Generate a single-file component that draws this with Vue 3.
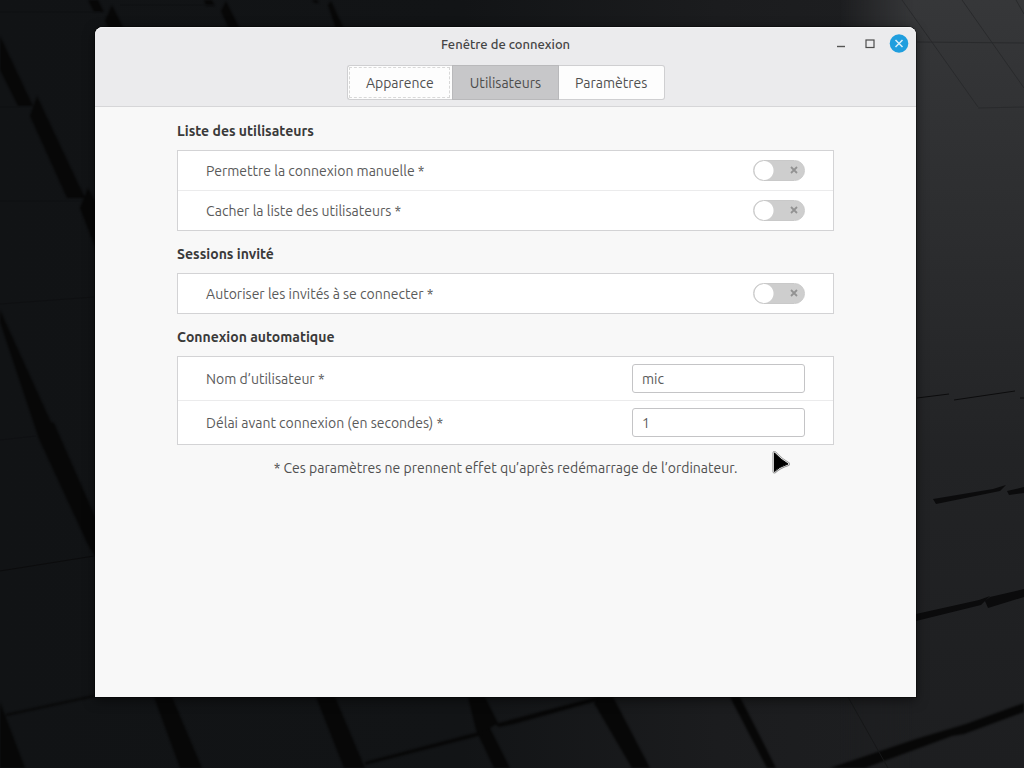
<script setup>
import { reactive, ref } from 'vue'

const tabs = ['Apparence', 'Utilisateurs', 'Paramètres']
const current = ref('Utilisateurs')

const sections = reactive([
  {
    title: 'Liste des utilisateurs',
    rows: [
      { id: 'manual', label: 'Permettre la connexion manuelle *', type: 'switch', value: false },
      { id: 'hide', label: 'Cacher la liste des utilisateurs *', type: 'switch', value: false },
    ],
  },
  {
    title: 'Sessions invité',
    rows: [
      { id: 'guest', label: 'Autoriser les invités à se connecter *', type: 'switch', value: false },
    ],
  },
  {
    title: 'Connexion automatique',
    rows: [
      { id: 'user', label: 'Nom d’utilisateur *', type: 'text', value: 'mic' },
      { id: 'delay', label: 'Délai avant connexion (en secondes) *', type: 'text', value: '1' },
    ],
  },
])
</script>

<template>
  <div class="desktop">
    <svg class="wallpaper" viewBox="0 0 1024 768" preserveAspectRatio="xMidYMid slice" aria-hidden="true">
      <defs>
        <linearGradient id="base" x1="0" y1="0" x2="1" y2="0">
          <stop offset="0" stop-color="#111315" />
          <stop offset="0.45" stop-color="#121416" />
          <stop offset="0.7" stop-color="#1b1c1e" />
          <stop offset="1" stop-color="#1f2022" />
        </linearGradient>
        <linearGradient id="glow" x1="0" y1="0" x2="0" y2="1">
          <stop offset="0" stop-color="#363739" />
          <stop offset="0.3" stop-color="#2c2d2f" />
          <stop offset="0.6" stop-color="#222325" />
          <stop offset="1" stop-color="#1d1e20" />
        </linearGradient>
        <linearGradient id="fade" x1="0" y1="0" x2="1" y2="0">
          <stop offset="0" stop-color="#fff" stop-opacity="0" />
          <stop offset="0.4" stop-color="#fff" />
        </linearGradient>
        <mask id="right"><rect x="840" width="184" height="768" fill="url(#fade)" /></mask>
        <filter id="soft" x="-5%" y="-5%" width="110%" height="110%" color-interpolation-filters="sRGB"><feGaussianBlur stdDeviation="0.8" /></filter>
      </defs>
      <rect width="1024" height="768" fill="url(#base)" />
      <rect x="840" width="184" height="768" fill="url(#glow)" mask="url(#right)" />
      <g fill="#070707" filter="url(#soft)">
        <path d="M88 0h10l6 12h-10zM105 21l7-16 12 24h-15zM204 0h8l3 6h-9zM221 11l5-10 14 28h-11zM312 0h5l2 3h-4zM328 5l3-4 13 28h-8z" />
        <path d="M0 36l33 70H18L0 70zM30 116l7-20 48 102H67zM80 208l8-20 12 22v50z" />
        <path d="M0 322V310l51 112 3 1 43 98v38l-8-12-50-108z" />
        <path d="M0 702l25 66H0z" />
        <path d="M154 697h18l30 71h-22zM316 697h19l30 71h-21zM468 697h17l13 26-8 5 20 40h-16l-18-38z" />
        <path d="M594 703l6-6h13l37 71h-18zM730 697h10l36 71h-9z" />
        <path d="M6 714l88-19v2L6 716zM365 762l125-33v4l-125 32zM495 724l105-28v4l-86 24-15 3z" />
        <path d="M830 768l86-29 50-15 58-21v9l-60 22-12 2-87 32z" />
      </g>
      <g fill="#0b0b0c">
        <path d="M933 499l60-10 13-4-6 6-64 13zM1007 491l17-4v6l-15 2z" />
        <path d="M916 614l63-14 11-4-9 9-65 16zM985 601l5-4 34-8v8l-36 11z" />
      </g>
      <g fill="none" stroke="#0c0c0d">
        <path d="M0 571l94-15M917 398l32-4M954 400l61-9M1020 398h4" />
        <path d="M848 697l40 71" stroke="#161718" />
        <path d="M902 0l76 107M962 0l62 88M917 42l107 1M978 108l46-1M1016 0l8 14" stroke="#292a2c" />
        <path d="M0 107h32M0 201h82M0 304l94-7M0 440l36-4M0 12h100M120 5h95" stroke="#0f1012" />
      </g>
    </svg>

    <main class="window">
      <header class="titlebar">
        <div class="caption">
          <h1>Fenêtre de connexion</h1>
          <div class="controls">
            <button type="button" aria-label="Réduire">
              <svg width="20" height="20" viewBox="0 0 20 20"><path d="M6 12.5h8" stroke="#555" stroke-width="1.4" /></svg>
            </button>
            <button type="button" aria-label="Agrandir">
              <svg width="20" height="20" viewBox="0 0 20 20"><rect x="6" y="6" width="8" height="7.5" fill="none" stroke="#4c4c4c" stroke-width="1.2" /></svg>
            </button>
            <button type="button" aria-label="Fermer">
              <svg width="20" height="20" viewBox="0 0 20 20"><circle cx="10" cy="9.5" r="9.3" fill="#1f9ede" /><path d="M6.5 6l7 7M13.5 6l-7 7" stroke="#d8effa" stroke-width="1.5" /></svg>
            </button>
          </div>
        </div>
        <nav class="tabs">
          <button
            v-for="(tab, i) in tabs"
            :key="tab"
            type="button"
            :class="{ active: tab === current, focused: i === 0 }"
            @click="current = tab"
          >{{ tab }}</button>
        </nav>
      </header>

      <div class="content">
        <section v-for="section in sections" :key="section.title">
          <h2>{{ section.title }}</h2>
          <div class="list">
            <div v-for="row in section.rows" :key="row.id" class="row" :class="row.type">
              <label :for="row.id">{{ row.label }}</label>
              <span v-if="row.type === 'switch'" class="toggle">
                <input :id="row.id" v-model="row.value" type="checkbox" role="switch" />
                <svg width="8" height="8" viewBox="0 0 8 8" aria-hidden="true"><path d="M1 1l6 6M7 1l-6 6" stroke="#929292" stroke-width="1.8" /></svg>
              </span>
              <input v-else :id="row.id" v-model="row.value" class="field" type="text" />
            </div>
          </div>
        </section>
        <p class="note">* Ces paramètres ne prennent effet qu’après redémarrage de l’ordinateur.</p>
      </div>
    </main>

    <svg class="pointer" width="20" height="26" viewBox="0 0 20 26" aria-hidden="true">
      <path d="M3.5 4v18.5q4-4.500 13.500-7.500Q10 11 3.500 4z" fill="#000" stroke="#8c8c8c" stroke-width="4" stroke-linejoin="round" />
      <path d="M3.500 4v18.500q4-4.500 13.500-7.500Q10 11 3.500 4z" fill="#000" stroke="#d8d8d8" stroke-width="2.600" stroke-linejoin="round" />
      <path d="M3.500 4v18.500q4-4.500 13.500-7.500Q10 11 3.500 4z" fill="#000" stroke="#000" stroke-linejoin="round" />
    </svg>
  </div>
</template>

<style>
body {
  margin: 0;
  background: #111315;
}
</style>

<style scoped>
.desktop {
  position: relative;
  box-sizing: border-box;
  display: flex;
  min-height: 100vh;
  padding: 27px 108px 71px 95px;
  font: 14px/18px Ubuntu, "Noto Sans", sans-serif;
  color: #5a5a5a;
}
.wallpaper {
  position: absolute;
  inset: 0;
  width: 100%;
  height: 100%;
}
.window {
  position: relative;
  flex: 1;
  background: #f8f8f8;
  border-radius: 8px 8px 0 0;
  box-shadow: 0 0 0 1px rgba(0, 0, 0, 0.35), 0 3px 12px rgba(0, 0, 0, 0.5);
}
.titlebar {
  background: #ebebed;
  border-bottom: 1px solid #d6d6d8;
  border-radius: 8px 8px 0 0;
  box-shadow: inset 0 1px #f5f5f6;
  padding-bottom: 6px;
}
.caption {
  display: grid;
  grid-template-columns: 1fr auto 1fr;
  align-items: center;
  height: 34px;
  padding: 0 7px;
  margin-bottom: 4px;
}
h1 {
  grid-column: 2;
  margin: 0;
  font-size: 13px;
  font-weight: 500;
  color: #444;
}
.controls {
  display: flex;
  justify-content: flex-end;
  gap: 9px;
}
.controls button {
  display: flex;
  padding: 0;
  border: 0;
  background: none;
}
.tabs {
  display: flex;
  width: 318px;
  height: 35px;
  margin: 0 auto;
}
.tabs button {
  position: relative;
  flex: 1;
  padding: 0;
  border: 1px solid #cfcfd1;
  border-width: 1px 0;
  background: #fdfdfd;
  font: inherit;
  color: #505050;
}
.tabs button:first-child {
  border-left-width: 1px;
  border-radius: 3px 0 0 3px;
}
.tabs button:last-child {
  border-right-width: 1px;
  border-radius: 0 3px 3px 0;
}
.tabs .active {
  border: 1px solid #b9b9bb;
  background: #c7c7c9;
  color: #4c4c4c;
}
.tabs .focused {
  outline: 1px dashed #d8d8d8;
  outline-offset: -3px;
}
.content {
  padding: 15px 10% 0;
}
h2 {
  margin: 0 0 10px;
  font-size: 14px;
  line-height: 18px;
  font-weight: 700;
  color: #3a3a3a;
}
section {
  margin-bottom: 14px;
}
.list {
  border: 1px solid #d3d3d5;
  background: #fff;
}
.row {
  display: flex;
  align-items: center;
  justify-content: space-between;
  height: 39px;
  padding: 0 28px;
}
.row.text {
  height: 43px;
}
.row + .row {
  border-top: 1px solid #ebebec;
}
.toggle {
  display: flex;
  position: relative;
}
.toggle input {
  appearance: none;
  box-sizing: border-box;
  width: 52px;
  height: 21px;
  margin: 0;
  border: 1px solid #c9c9c9;
  border-radius: 11px;
  background: radial-gradient(circle at 10px 50%, #fff 9px, #cecece 10px);
}
.toggle input:checked {
  background: radial-gradient(circle at 40px 50%, #fff 9px, #1f9ede 10px);
}
.toggle svg {
  position: absolute;
  top: 6px;
  right: 7px;
  pointer-events: none;
}
.field {
  box-sizing: border-box;
  width: 173px;
  height: 29px;
  padding: 0 9px;
  border: 1px solid #c4c4c6;
  border-radius: 3px;
  background: #fff;
  font: inherit;
  color: #5a5a5a;
}
.note {
  margin: 0;
  text-align: center;
  color: #505050;
}
.pointer {
  position: absolute;
  left: 771px;
  top: 449px;
  pointer-events: none;
}
</style>
